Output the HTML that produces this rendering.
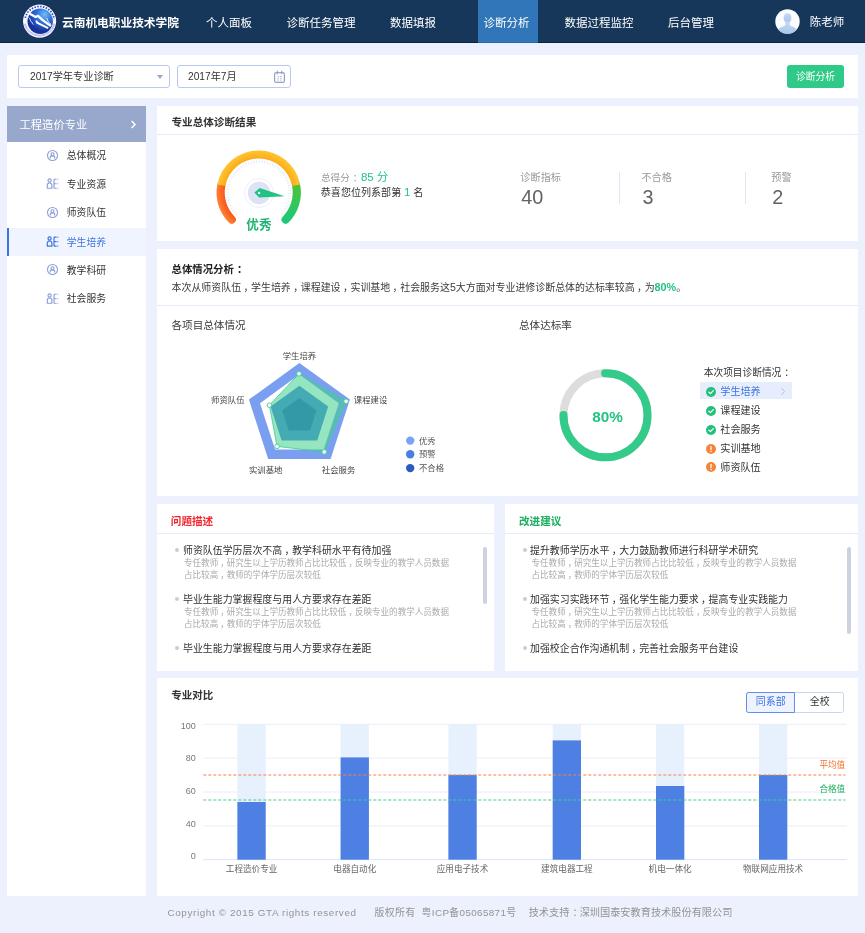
<!DOCTYPE html>
<html lang="zh-CN">
<head>
<meta charset="utf-8">
<title>诊断分析</title>
<style>
*{box-sizing:border-box;margin:0;padding:0}
html,body{width:865px;height:933px;overflow:hidden}
body{will-change:transform}
body{background:#ecf1fd;font-family:"Liberation Sans","Noto Sans CJK SC",sans-serif;color:#333;position:relative;font-size:9.6px}
.abs{position:absolute}
.t{position:absolute;white-space:nowrap;line-height:16px;height:16px}
.card{position:absolute;background:#fff}
.hr{position:absolute;height:1px;background:#e4ebfa}
/* header */
#hd{position:absolute;left:0;top:0;width:865px;height:42.600px;background:#17375a;border-bottom:1.600px solid #082447}
#hd .nav{position:absolute;top:0;height:41px;line-height:46.5px;color:#fff;font-size:11.5px;white-space:nowrap}
#hd .act{background:#3076b8;text-align:center;height:42.600px;border-bottom:1.600px solid #226bb0}
/* sidebar */
#sb{position:absolute;left:7px;top:106px;width:139px;height:789.800px;background:#fff}
#sb .head{position:absolute;left:0;top:0;width:139px;height:36px;background:#97a8cc;color:#fff}
.mi{position:absolute;left:0;width:139px;height:28.6px}
.mi .lbl{position:absolute;left:59.8px;top:7.1px;line-height:16px;font-size:9.8px;color:#333;white-space:nowrap}
.mi svg{position:absolute;left:39px;top:7.6px}
.mi.on{height:28.3px;background:#f0f4fe;border-left:2px solid #3d74e0}
.mi.on .lbl{color:#3d74e0;left:57.8px}
.mi.on svg{left:37px}
.c{position:relative;left:.24em}.k{left:.3em}
</style>
</head>
<body>
<!-- HEADER -->
<div id="hd">
  <svg class="abs" style="left:22px;top:4px" width="36" height="36" viewBox="0 0 36 36">
    <defs><radialGradient id="lg" gradientUnits="userSpaceOnUse" cx="22.500" cy="10.500" r="17"><stop offset="0" stop-color="#74bcf8"/><stop offset="0.450" stop-color="#2f74dc"/><stop offset="1" stop-color="#16329a"/></radialGradient></defs>
    <circle cx="17.600" cy="17.200" r="17.300" fill="#1c2470"/>
    <circle cx="17.600" cy="17.200" r="16.600" fill="#f6f8fd"/>
    <path d="M3.28 13.89A14.700 14.700 0 0 1 32.16 15.15" fill="none" stroke="#2b4db5" stroke-width="1.700" stroke-dasharray="1.500 1.380"/>
    <path d="M3.200 19.500A14.700 14.700 0 0 0 32 19.500" fill="none" stroke="#6d7cc8" stroke-width="0.500"/>
    <path d="M2.300 20A15.700 15.700 0 0 0 32.900 20" fill="none" stroke="#6d7cc8" stroke-width="0.400"/>
    <circle cx="18.200" cy="17.300" r="12.700" fill="url(#lg)"/>
    <path d="M6.400 9L10.500 11.300L13.600 13L16 11.800L20.700 16.100L25 19.200L29 22" fill="none" stroke="#fff" stroke-width="2.300" stroke-linejoin="round"/>
    <path d="M14.300 16.500L15 18.600L20.500 21.400L26.200 24.200" fill="none" stroke="#fff" stroke-width="1.900" stroke-linejoin="round"/>
    <path d="M7 13.700C8.600 14.800 8 16.600 9.200 17.600S10 19.500 11 20.300" fill="none" stroke="#fff" stroke-width="0.900" stroke-linecap="round"/>
    <path d="M24.600 14.200C26 15.200 25.200 16.600 26.400 17.600S27.400 19.200 28.400 19.900" fill="none" stroke="#fff" stroke-width="0.900" stroke-linecap="round"/>
  </svg>
  <div class="nav" style="left:62px;font-weight:bold;font-size:11.7px">云南机电职业技术学院</div>
  <div class="nav" style="left:206px">个人面板</div>
  <div class="nav" style="left:286.500px">诊断任务管理</div>
  <div class="nav" style="left:390px">数据填报</div>
  <div class="nav act" style="left:478px;width:60px;padding-right:3px">诊断分析</div>
  <div class="nav" style="left:564.500px">数据过程监控</div>
  <div class="nav" style="left:668px">后台管理</div>
  <svg class="abs" style="left:774.500px;top:9.300px" width="25" height="25" viewBox="0 0 25 25">
    <defs><clipPath id="av"><circle cx="12.500" cy="12.500" r="12.200"/></clipPath><linearGradient id="avg" x1="0" y1="0" x2="0" y2="1"><stop offset="0" stop-color="#c3d8f2"/><stop offset="1" stop-color="#aac6ea"/></linearGradient></defs>
    <circle cx="12.500" cy="12.500" r="12.200" fill="#fbfcfe"/>
    <g clip-path="url(#av)" fill="url(#avg)"><ellipse cx="12.500" cy="9" rx="3.900" ry="4.800"/><path d="M10.300 12.500h4.400v3.200c0 .8 1.200 1.300 3.300 2 2.300.8 3.500 2 4 4v4H3v-4c.5-2 1.700-3.200 4-4 2.100-.7 3.300-1.200 3.300-2z"/></g>
  </svg>
  <div class="nav" style="left:809.800px;line-height:45.700px">陈老师</div>
</div>

<!-- TOOLBAR -->
<div class="card" style="left:7px;top:55px;width:851px;height:43px"></div>
<div class="abs" style="left:18px;top:65px;width:152px;height:23px;border:1px solid #b9caf0;border-radius:3px;background:#fff"></div>
<div class="t" style="left:30px;top:68.500px;font-size:10.2px;color:#333">2017学年专业诊断</div>
<div class="abs" style="left:157.300px;top:74.500px;width:0;height:0;border-left:3.500px solid transparent;border-right:3.500px solid transparent;border-top:4.500px solid #9aa9c9"></div>
<div class="abs" style="left:177px;top:65px;width:114px;height:23px;border:1px solid #b9caf0;border-radius:3px;background:#fff"></div>
<div class="t" style="left:188px;top:68.500px;font-size:10.2px;color:#333">2017年7月</div>
<svg class="abs" style="left:273px;top:69.500px" width="13" height="14" viewBox="0 0 13 14"><rect x="1.600" y="2.600" width="9.800" height="9.800" rx="1.600" fill="none" stroke="#93a3c8" stroke-width="1.200"/><path d="M4.300 0.800v3.400M8.700 0.800v3.400" stroke="#93a3c8" stroke-width="1.200" fill="none"/><path d="M4.600 6.500h1.100M7.300 6.500h1.100M4.600 8.300h1.100M7.300 8.300h1.100M4.600 10.100h1.100M7.300 10.100h1.100" stroke="#93a3c8" stroke-width="1" fill="none"/></svg>
<div class="abs" style="left:787px;top:65px;width:57px;height:23px;background:#2fca88;border-radius:3px"></div>
<div class="t" style="left:787px;top:69px;width:57px;text-align:center;color:#fff;font-size:9.8px">诊断分析</div>

<!-- SIDEBAR -->
<div id="sb">
  <div class="head"><div class="t" style="left:12.5px;top:10.7px;font-size:11.3px;color:#fff">工程造价专业</div>
    <svg class="abs" style="left:122px;top:12.500px" width="8" height="11" viewBox="0 0 8 11"><path d="M2.600 2.100l3.400 3.500-3.400 3.500" fill="none" stroke="#fff" stroke-width="1.500"/></svg>
  </div>
  <div class="mi" style="top:35.200px"><svg width="13" height="13" viewBox="0 0 13 13"><circle cx="6.500" cy="6.500" r="5" fill="none" stroke="#8a9fd6" stroke-width="1.100"/><circle cx="6.500" cy="5.200" r="1.500" fill="none" stroke="#8a9fd6" stroke-width="1.150"/><path d="M4.300 9.500v-1.200a2.200 1.500 0 0 1 4.400 0v1.200" fill="none" stroke="#8a9fd6" stroke-width="1.150"/></svg><div class="lbl">总体概况</div></div>
  <div class="mi" style="top:63.800px"><svg width="13" height="13" viewBox="0 0 13 13"><circle cx="3.600" cy="3.500" r="1.600" fill="none" stroke="#8a9fd6" stroke-width="1.150"/><path d="M1.300 11.200V8.300a2.300 2.300 0 0 1 4.600 0V11.200Z" fill="none" stroke="#8a9fd6" stroke-width="1.150" stroke-linejoin="round"/><path d="M8 2.200V11.200M8 2.200H10.600M8 6.700H10.600M8 11.200H10.600" stroke="#8a9fd6" stroke-width="1.150" fill="none"/><path d="M11.400 2.200h0.900M11.400 6.700h0.900M11.400 11.200h0.900" stroke="#8a9fd6" stroke-width="1.150" fill="none"/></svg><div class="lbl">专业资源</div></div>
  <div class="mi" style="top:92.400px"><svg width="13" height="13" viewBox="0 0 13 13"><circle cx="6.500" cy="6.500" r="5" fill="none" stroke="#8a9fd6" stroke-width="1.100"/><circle cx="6.500" cy="5.200" r="1.500" fill="none" stroke="#8a9fd6" stroke-width="1.150"/><path d="M4.300 9.500v-1.200a2.200 1.500 0 0 1 4.400 0v1.200" fill="none" stroke="#8a9fd6" stroke-width="1.150"/></svg><div class="lbl">师资队伍</div></div>
  <div class="mi on" style="top:121.700px"><svg width="13" height="13" viewBox="0 0 13 13"><circle cx="3.600" cy="3.500" r="1.600" fill="none" stroke="#3d74e0" stroke-width="1.200"/><path d="M1.300 11.200V8.300a2.300 2.300 0 0 1 4.600 0V11.200Z" fill="none" stroke="#3d74e0" stroke-width="1.200" stroke-linejoin="round"/><path d="M8 2.200V11.200M8 2.200H10.600M8 6.700H10.600M8 11.200H10.600" stroke="#3d74e0" stroke-width="1.200" fill="none"/><path d="M11.400 2.200h0.900M11.400 6.700h0.900M11.400 11.200h0.900" stroke="#3d74e0" stroke-width="1.200" fill="none"/></svg><div class="lbl">学生培养</div></div>
  <div class="mi" style="top:149.600px"><svg width="13" height="13" viewBox="0 0 13 13"><circle cx="6.500" cy="6.500" r="5" fill="none" stroke="#8a9fd6" stroke-width="1.100"/><circle cx="6.500" cy="5.200" r="1.500" fill="none" stroke="#8a9fd6" stroke-width="1.150"/><path d="M4.300 9.500v-1.200a2.200 1.500 0 0 1 4.400 0v1.200" fill="none" stroke="#8a9fd6" stroke-width="1.150"/></svg><div class="lbl">教学科研</div></div>
  <div class="mi" style="top:178.200px"><svg width="13" height="13" viewBox="0 0 13 13"><circle cx="3.600" cy="3.500" r="1.600" fill="none" stroke="#8a9fd6" stroke-width="1.150"/><path d="M1.300 11.200V8.300a2.300 2.300 0 0 1 4.600 0V11.200Z" fill="none" stroke="#8a9fd6" stroke-width="1.150" stroke-linejoin="round"/><path d="M8 2.200V11.200M8 2.200H10.600M8 6.700H10.600M8 11.200H10.600" stroke="#8a9fd6" stroke-width="1.150" fill="none"/><path d="M11.400 2.200h0.900M11.400 6.700h0.900M11.400 11.200h0.900" stroke="#8a9fd6" stroke-width="1.150" fill="none"/></svg><div class="lbl">社会服务</div></div>
</div>

<!-- CARD1 -->
<div class="card" style="left:157px;top:106px;width:701px;height:135px"></div>
<div class="t" style="left:171.500px;top:113.500px;font-size:10.6px;font-weight:bold;color:#333">专业总体诊断结果</div>
<div class="hr" style="left:157px;top:134px;width:701px"></div>
<svg class="abs" style="left:157px;top:135px" width="300" height="106" viewBox="157 135 300 106">
  <defs>
    <radialGradient id="gR" gradientUnits="userSpaceOnUse" cx="258.700" cy="192.600" r="42.200"><stop offset="0.800" stop-color="#f95515"/><stop offset="1" stop-color="#ff8238"/></radialGradient>
    <radialGradient id="gY" gradientUnits="userSpaceOnUse" cx="258.700" cy="192.600" r="42.200"><stop offset="0.800" stop-color="#fbab1a"/><stop offset="1" stop-color="#fec532"/></radialGradient>
    <linearGradient id="gG" x1="0" y1="0" x2="0" y2="1"><stop offset="0" stop-color="#4cc436"/><stop offset="1" stop-color="#1fc878"/></linearGradient>
  </defs>
  <path d="M236.780 214.520A31 31 0 1 1 280.620 214.520" fill="none" stroke="#dbe1f2" stroke-width="2.400" stroke-dasharray="0.700 2.005"/>
  <path d="M231.760 219.540A38.100 38.100 0 0 1 221.300 185.330" fill="none" stroke="url(#gR)" stroke-width="8.200" stroke-linecap="round"/>
  <path d="M296.100 185.330A38.100 38.100 0 0 1 285.640 219.540" fill="none" stroke="url(#gG)" stroke-width="8.200" stroke-linecap="round"/>
  <path d="M221.300 185.330A38.100 38.100 0 0 1 296.100 185.330" fill="none" stroke="url(#gY)" stroke-width="8.200"/>
  <circle cx="259.100" cy="193" r="14.500" fill="#fff" stroke="#e6ebf8" stroke-width="0.800"/>
  <circle cx="259.100" cy="193" r="11.300" fill="#dde3f5"/>
  <path d="M254.300 192.400L259.700 188L284.600 196.200L259.100 197.600Z" fill="#22c382"/>
  <circle cx="259.100" cy="192.900" r="1.200" fill="#fff"/>
</svg>
<div class="t" style="left:228.900px;top:217px;width:60px;text-align:center;font-size:12.6px;font-weight:bold;color:#20b573">优秀</div>
<div class="t" style="left:321px;top:169.200px;font-size:9.6px;color:#999">总得分<span class="c k">：</span><span style="font-size:11.5px;color:#22c382;margin-left:1.500px">85 分</span></div>
<div class="t" style="left:320.800px;top:183.500px;font-size:10.05px;color:#333">恭喜您位列系部第 <span style="color:#22c382;font-size:11.5px">1</span> 名</div>
<div class="t" style="left:520.300px;top:169.800px;font-size:10.2px;color:#999">诊断指标</div>
<div class="t" style="left:521.3px;top:183.700px;font-size:19.8px;line-height:26px;height:26px;color:#626262">40</div>
<div class="abs" style="left:619px;top:171.500px;width:1px;height:32px;background:#dfe7f7"></div>
<div class="t" style="left:641.400px;top:169.800px;font-size:10.2px;color:#999">不合格</div>
<div class="t" style="left:642.4px;top:183.700px;font-size:19.8px;line-height:26px;height:26px;color:#626262">3</div>
<div class="abs" style="left:745px;top:171.500px;width:1px;height:32px;background:#dfe7f7"></div>
<div class="t" style="left:771.300px;top:169.800px;font-size:10.2px;color:#999">预警</div>
<div class="t" style="left:772.3px;top:183.700px;font-size:19.8px;line-height:26px;height:26px;color:#626262">2</div>
<!-- CARD2 -->
<div class="card" style="left:157px;top:249px;width:701px;height:247.200px"></div>
<div class="t" style="left:171.500px;top:262px;font-size:10.4px;font-weight:bold;color:#222">总体情况分析<span class="c k">：</span></div>
<div class="t" style="left:171.500px;top:279.400px;font-size:9.95px;color:#3a3a3a">本次从师资队伍<span class="c">，</span>学生培养<span class="c">，</span>课程建设<span class="c">，</span>实训基地<span class="c">，</span>社会服务这<span style="font-size:10.6px">5</span>大方面对专业进修诊断总体的达标率较高<span class="c">，</span>为<span style="color:#22c382;font-weight:bold;font-size:10.8px">80%</span>。</div>
<div class="hr" style="left:157px;top:305.300px;width:701px"></div>
<div class="t" style="left:171.500px;top:317px;font-size:10.6px;color:#3a3a3a">各项目总体情况</div>
<div class="t" style="left:519px;top:317px;font-size:10.6px;color:#3a3a3a">总体达标率</div>
<svg class="abs" style="left:157px;top:340px" width="701" height="150" viewBox="157 340 701 150" font-family="'Liberation Sans','Noto Sans CJK SC',sans-serif">
  <polygon points="299.4,362.9 349.9,399.6 330.6,459.0 268.2,459.0 248.9,399.6" fill="#7b9ff0"/>
  <polygon points="299.4,374.6 338.8,403.2 323.7,449.5 275.1,449.5 260.0,403.2" fill="#ffffff"/>
  <polygon points="299.4,385.7 328.2,406.6 317.2,440.5 281.6,440.5 270.6,406.6" fill="#4a7fe2"/>
  <polygon points="299.4,397.9 316.6,410.4 310.0,430.6 288.8,430.6 282.2,410.4" fill="#2457c4"/>
  <polygon points="299.0,373.8 346.1,401.3 324.2,451.9 277.0,446.4 269.4,405.2" fill="#3fcf8e" fill-opacity="0.550" stroke="#3ccf90" stroke-width="0.800"/>
  <g fill="#fff" stroke="#3ccf90" stroke-width="0.900">
    <circle cx="299" cy="373.8" r="2.300"/><circle cx="346.1" cy="401.3" r="2.300"/><circle cx="324.2" cy="451.9" r="2.300"/><circle cx="277" cy="446.4" r="2.300"/><circle cx="269.4" cy="405.2" r="2.300"/>
  </g>
  <g font-size="8.400" fill="#444">
    <text x="299.400" y="358.700" text-anchor="middle">学生培养</text>
    <text x="353.800" y="402.600">课程建设</text>
    <text x="244.600" y="402.600" text-anchor="end">师资队伍</text>
    <text x="265.700" y="473" text-anchor="middle">实训基地</text>
    <text x="338.600" y="473" text-anchor="middle">社会服务</text>
    <text x="419" y="443.600" fill="#555">优秀</text>
    <text x="419" y="457.200" fill="#555">预警</text>
    <text x="419" y="471.100" fill="#555">不合格</text>
  </g>
  <circle cx="410.200" cy="440.600" r="4.200" fill="#7ba3f3"/>
  <circle cx="410.200" cy="454.200" r="4.200" fill="#4a7fe2"/>
  <circle cx="410.200" cy="468.100" r="4.200" fill="#2a5cc4"/>
  <circle cx="605.5" cy="415.3" r="42" fill="none" stroke="#dddddd" stroke-width="8"/>
  <path d="M605.13 373.30A42 42 0 1 1 563.50 414.93" fill="none" stroke="#33ca8a" stroke-width="8" stroke-linecap="round"/>
  <text x="607.600" y="422" text-anchor="middle" font-size="15.300" font-weight="bold" fill="#22c382">80%</text>
</svg>
<div class="t" style="left:703.800px;top:364.600px;font-size:9.7px;color:#333">本次项目诊断情况<span class="c k">：</span></div>
<div class="abs" style="left:700px;top:382.300px;width:92px;height:16.800px;background:#e6edfc"></div>
<svg class="abs" style="left:705.800px;top:386.5px" width="10" height="10" viewBox="0 0 10 10"><circle cx="5" cy="5" r="5" fill="#22c07a"/><path d="M2.800 5.100l1.600 1.600 2.900-3.100" fill="none" stroke="#fff" stroke-width="1.200" stroke-linecap="round" stroke-linejoin="round"/></svg><div class="t" style="left:720.300px;top:383.6px;font-size:10.1px;color:#3d74e0">学生培养</div>
<svg class="abs" style="left:705.800px;top:405.6px" width="10" height="10" viewBox="0 0 10 10"><circle cx="5" cy="5" r="5" fill="#22c07a"/><path d="M2.800 5.100l1.600 1.600 2.900-3.100" fill="none" stroke="#fff" stroke-width="1.200" stroke-linecap="round" stroke-linejoin="round"/></svg><div class="t" style="left:720.300px;top:402.7px;font-size:10.1px;color:#333">课程建设</div>
<svg class="abs" style="left:705.800px;top:424.6px" width="10" height="10" viewBox="0 0 10 10"><circle cx="5" cy="5" r="5" fill="#22c07a"/><path d="M2.800 5.100l1.600 1.600 2.900-3.100" fill="none" stroke="#fff" stroke-width="1.200" stroke-linecap="round" stroke-linejoin="round"/></svg><div class="t" style="left:720.300px;top:421.7px;font-size:10.1px;color:#333">社会服务</div>
<svg class="abs" style="left:705.800px;top:443.5px" width="10" height="10" viewBox="0 0 10 10"><circle cx="5" cy="5" r="5" fill="#f5843a"/><path d="M5 2.500v3.100" stroke="#fff" stroke-width="1.300" stroke-linecap="round"/><circle cx="5" cy="7.500" r="0.750" fill="#fff"/></svg><div class="t" style="left:720.300px;top:440.6px;font-size:10.1px;color:#333">实训基地</div>
<svg class="abs" style="left:705.800px;top:462.4px" width="10" height="10" viewBox="0 0 10 10"><circle cx="5" cy="5" r="5" fill="#f5843a"/><path d="M5 2.500v3.100" stroke="#fff" stroke-width="1.300" stroke-linecap="round"/><circle cx="5" cy="7.500" r="0.750" fill="#fff"/></svg><div class="t" style="left:720.300px;top:459.5px;font-size:10.1px;color:#333">师资队伍</div>
<svg class="abs" style="left:779.500px;top:387px" width="6" height="9" viewBox="0 0 6 9"><path d="M1.300 1l3.300 3.500-3.300 3.500" fill="none" stroke="#a9b4cc" stroke-width="0.800"/></svg>
<!-- CARD3 -->
<div class="card" style="left:157px;top:503.600px;width:336.500px;height:167.700px"></div>
<div class="t" style="left:170.800px;top:513.200px;font-size:10.6px;font-weight:bold;color:#f5262e">问题描述</div>
<div class="hr" style="left:157px;top:533px;width:336.500px"></div>
<div class="abs bl" style="left:175.2px;top:548.0px;width:4.200px;height:4.200px;border-radius:50%;background:#cdcdcd"></div><div class="t" style="left:183px;top:543.1px;font-size:9.93px;color:#303030">师资队伍学历层次不高<span class="c">，</span>教学科研水平有待加强</div>
<div class="t" style="left:184px;top:554.6px;font-size:8.55px;color:#aaa">专任教师<span class="c">，</span>研究生以上学历教师占比比较低<span class="c">，</span>反映专业的教学人员数据</div>
<div class="t" style="left:184px;top:567.0px;font-size:8.55px;color:#aaa">占比较高<span class="c">，</span>教师的学体学历层次较低</div>
<div class="abs bl" style="left:175.2px;top:596.9px;width:4.200px;height:4.200px;border-radius:50%;background:#cdcdcd"></div><div class="t" style="left:183px;top:592.0px;font-size:9.93px;color:#303030">毕业生能力掌握程度与用人方要求存在差距</div>
<div class="t" style="left:184px;top:603.5px;font-size:8.55px;color:#aaa">专任教师<span class="c">，</span>研究生以上学历教师占比比较低<span class="c">，</span>反映专业的教学人员数据</div>
<div class="t" style="left:184px;top:615.9px;font-size:8.55px;color:#aaa">占比较高<span class="c">，</span>教师的学体学历层次较低</div>
<div class="abs bl" style="left:175.2px;top:646.1px;width:4.200px;height:4.200px;border-radius:50%;background:#cdcdcd"></div><div class="t" style="left:183px;top:641.2px;font-size:9.93px;color:#303030">毕业生能力掌握程度与用人方要求存在差距</div>
<div class="abs" style="left:483.300px;top:547px;width:4.200px;height:57px;border-radius:2.100px;background:#ccd2de"></div>
<!-- CARD4 -->
<div class="card" style="left:505px;top:503.600px;width:353px;height:167.700px"></div>
<div class="t" style="left:519px;top:513.200px;font-size:10.6px;font-weight:bold;color:#1aaf5d">改进建议</div>
<div class="hr" style="left:505px;top:533px;width:353px"></div>
<div class="abs bl" style="left:522.5px;top:548.0px;width:4.200px;height:4.200px;border-radius:50%;background:#cdcdcd"></div><div class="t" style="left:530px;top:543.1px;font-size:9.93px;color:#303030">提升教师学历水平<span class="c">，</span>大力鼓励教师进行科研学术研究</div>
<div class="t" style="left:531.5px;top:554.6px;font-size:8.55px;color:#aaa">专任教师<span class="c">，</span>研究生以上学历教师占比比较低<span class="c">，</span>反映专业的教学人员数据</div>
<div class="t" style="left:531.5px;top:567.0px;font-size:8.55px;color:#aaa">占比较高<span class="c">，</span>教师的学体学历层次较低</div>
<div class="abs bl" style="left:522.5px;top:596.9px;width:4.200px;height:4.200px;border-radius:50%;background:#cdcdcd"></div><div class="t" style="left:530px;top:592.0px;font-size:9.93px;color:#303030">加强实习实践环节<span class="c">，</span>强化学生能力要求<span class="c">，</span>提高专业实践能力</div>
<div class="t" style="left:531.5px;top:603.5px;font-size:8.55px;color:#aaa">专任教师<span class="c">，</span>研究生以上学历教师占比比较低<span class="c">，</span>反映专业的教学人员数据</div>
<div class="t" style="left:531.5px;top:615.9px;font-size:8.55px;color:#aaa">占比较高<span class="c">，</span>教师的学体学历层次较低</div>
<div class="abs bl" style="left:522.5px;top:646.1px;width:4.200px;height:4.200px;border-radius:50%;background:#cdcdcd"></div><div class="t" style="left:530px;top:641.2px;font-size:9.93px;color:#303030">加强校企合作沟通机制<span class="c">，</span>完善社会服务平台建设</div>
<div class="abs" style="left:846.800px;top:546.500px;width:4.200px;height:87px;border-radius:2.100px;background:#ccd2de"></div>
<!-- CARD5 -->
<div class="card" style="left:157px;top:677.800px;width:701px;height:218px"></div>
<div class="t" style="left:171.300px;top:687.300px;font-size:10.5px;font-weight:bold;color:#333">专业对比</div>
<div class="abs" style="left:746.300px;top:691.900px;width:98.200px;height:20.900px;border:1px solid #c9d6f2;border-radius:2.500px;background:#fff"></div>
<div class="abs" style="left:746.300px;top:691.900px;width:48.800px;height:20.900px;border:1px solid #5b8ff0;border-radius:2.500px 0 0 2.500px;background:#eef3ff"></div>
<div class="t" style="left:746.300px;top:694.400px;width:48.800px;text-align:center;font-size:10px;color:#3d74e0">同系部</div>
<div class="t" style="left:795.100px;top:694.400px;width:49.400px;text-align:center;font-size:10px;color:#333">全校</div>
<svg class="abs" style="left:157px;top:715px" width="701" height="170" viewBox="157 715 701 170" font-family="'Liberation Sans','Noto Sans CJK SC',sans-serif">
<path d="M203.300 724.3H846.800" stroke="#e9eefb" stroke-width="1"/><path d="M203.300 758.1H846.800" stroke="#e9eefb" stroke-width="1"/><path d="M203.300 792.0H846.800" stroke="#e9eefb" stroke-width="1"/><path d="M203.300 825.9H846.800" stroke="#e9eefb" stroke-width="1"/><path d="M203.300 859.700H846.800" stroke="#d9e3f8" stroke-width="1"/>
<rect x="237.4" y="724.3" width="28.300" height="135.4" fill="#e7f0fd"/><rect x="237.4" y="802" width="28.300" height="57.7" fill="#4e7fe3"/>
<rect x="340.6" y="724.3" width="28.300" height="135.4" fill="#e7f0fd"/><rect x="340.6" y="757.4" width="28.300" height="102.3" fill="#4e7fe3"/>
<rect x="448.4" y="724.3" width="28.300" height="135.4" fill="#e7f0fd"/><rect x="448.4" y="774.9" width="28.300" height="84.8" fill="#4e7fe3"/>
<rect x="552.7" y="724.3" width="28.300" height="135.4" fill="#e7f0fd"/><rect x="552.7" y="740.4" width="28.300" height="119.3" fill="#4e7fe3"/>
<rect x="656" y="724.3" width="28.300" height="135.4" fill="#e7f0fd"/><rect x="656" y="786" width="28.300" height="73.7" fill="#4e7fe3"/>
<rect x="759" y="724.3" width="28.300" height="135.4" fill="#e7f0fd"/><rect x="759" y="775" width="28.300" height="84.7" fill="#4e7fe3"/>
<g font-size="9" fill="#777" text-anchor="end"><text x="195.800" y="728.800">100</text><text x="195.800" y="761.4">80</text><text x="195.800" y="793.9">60</text><text x="195.800" y="827.3">40</text><text x="195.800" y="858.900">0</text></g>
<g font-size="8.600" fill="#666" text-anchor="middle"><text x="251.6" y="871.500">工程造价专业</text><text x="354.8" y="871.500">电器自动化</text><text x="462.5" y="871.500">应用电子技术</text><text x="566.9" y="871.500">建筑电器工程</text><text x="670.1" y="871.500">机电一体化</text><text x="773.1" y="871.500">物联网应用技术</text></g>
<path d="M203.300 775H845.500" stroke="#f5824a" stroke-width="1" stroke-dasharray="3 2"/><path d="M203.300 800H845.500" stroke="#3fd08f" stroke-width="1" stroke-dasharray="3 2"/><text x="845.200" y="767.500" text-anchor="end" font-size="8.600" fill="#f5702a">平均值</text><text x="845.200" y="792" text-anchor="end" font-size="8.600" fill="#1aaf5d">合格值</text></svg>
<!-- FOOTER -->
<div class="t" id="f1" style="left:167.500px;top:904.500px;font-size:9.9px;color:#939393;letter-spacing:0.62px">Copyright © 2015 GTA rights reserved</div>
<div class="t" id="f2" style="left:374.500px;top:904.500px;font-size:9.9px;color:#939393;letter-spacing:0.35px">版权所有&nbsp; 粤ICP备05065871号</div>
<div class="t" id="f3" style="left:528.700px;top:904.500px;font-size:10.2px;color:#939393">技术支持<span class="c k">：</span>深圳国泰安教育技术股份有限公司</div>
</body>
</html>
